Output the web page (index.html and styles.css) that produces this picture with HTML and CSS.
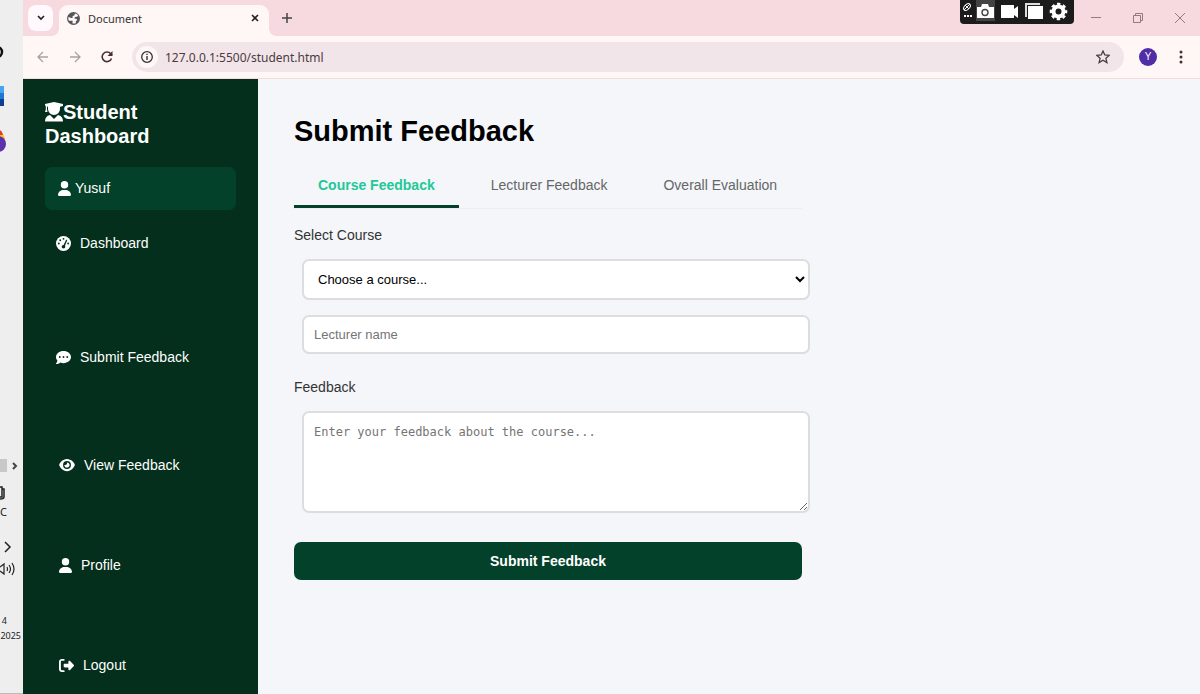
FILE: index.html
```
<!DOCTYPE html>
<html lang="en">
<head>
    <meta charset="UTF-8">
    <meta name="viewport" content="width=device-width, initial-scale=1.0">
    <title>Document</title>
    <link rel="stylesheet" href="styles.css">
</head>
<body>
<svg class="symbols" aria-hidden="true">
    <symbol id="user" viewBox="0 0 448 512"><path d="M224 256A128 128 0 1 0 224 0a128 128 0 1 0 0 256zm-45.7 48C79.8 304 0 383.8 0 482.3C0 498.7 13.3 512 29.7 512l388.6 0c16.4 0 29.7-13.3 29.7-29.7C448 383.8 368.2 304 269.7 304l-91.4 0z"/></symbol>
</svg>

<!-- desktop taskbar -->
<aside class="taskbar">
    <svg class="task-app" width="23" height="20" viewBox="0 0 23 20"><circle cx="-3" cy="10" r="5" fill="none" stroke="#111" stroke-width="2.5"/></svg>
    <svg class="task-app" width="23" height="20" viewBox="0 0 23 20"><path fill="#43a5ee" d="M0 0h4v7H0z"/><path fill="#2176d2" d="M0 7h4v6H0z"/><path fill="#103f91" d="M0 13h4v7H0z"/></svg>
    <svg class="task-app" width="23" height="22" viewBox="0 0 23 22"><circle cx="-5" cy="10" r="10" fill="#fbc116"/><path fill="#e33b2e" d="M0 0q3 2 3 5H0z"/><circle cx="-2" cy="14" r="8" fill="#5b31ae"/></svg>
    <div class="task-scroll"><span class="thumb"></span><svg width="8" height="8" viewBox="0 0 8 8"><path d="M2 1l3 3-3 3" fill="none" stroke="#444" stroke-width="2"/></svg></div>
    <svg class="task-clip" width="23" height="16" viewBox="0 0 23 16"><path d="M0 2h2v10H0M2 4h2v8q0 2-4 2" fill="none" stroke="#222" stroke-width="1.5"/></svg>
    <span class="temp">C</span>
    <svg class="task-more" width="23" height="12" viewBox="0 0 23 12"><path d="M5 1l5 5-5 5" fill="none" stroke="#222" stroke-width="1.5"/></svg>
    <svg class="task-sound" width="23" height="14" viewBox="0 0 23 14"><path d="M0 5l4-3v10l-4-3M7 5q1 2 0 4M9 3q3 4 0 8M12 1q4 6 0 12" fill="none" stroke="#222" stroke-width="1.2"/></svg>
    <div class="clock"><span class="time">4</span><span>2025</span></div>
</aside>

<div class="browser">
    <header class="tab-bar">
        <button class="tab-search" aria-label="Search tabs"><svg width="10" height="10" viewBox="0 0 10 10"><path d="M2 3l3 3 3-3" fill="none" stroke="#222" stroke-width="1.7"/></svg></button>
        <div class="tab">
            <svg width="13" height="13" viewBox="0 0 14 14"><circle cx="7" cy="7" r="7" fill="#53565b"/><path d="M8.500 1.500L8 3.500 6 4.500v2H4.500L1.500 5.500Q1 8 2 9.500h4v2.800Q8 12.800 9.500 12V9.800l1.500-.8-.5-1.500L8 7l.5-1.500L11 5l1-1.500Q10.500 1.800 8.500 1.500z" fill="#fff7f5"/></svg>
            <span class="tab-name">Document</span>
            <button class="chrome-btn" aria-label="Close tab"><svg width="8" height="8" viewBox="0 0 8 8"><path d="M1 1l6 6M7 1L1 7" stroke="#222" stroke-width="1.600"/></svg></button>
        </div>
        <button class="chrome-btn new-tab" aria-label="New tab"><svg width="10" height="10" viewBox="0 0 10 10"><path d="M5 0v10M0 5h10" stroke="#444" stroke-width="1.500"/></svg></button>
        <div class="recorder">
            <svg width="114" height="24" viewBox="0 0 114 24">
                <path d="M16 0h19v21H16z" fill="#444"/>
                <g fill="none" stroke="#fff"><ellipse cx="7" cy="7" rx="4" ry="2.500" transform="rotate(-45 7 7)"/><path d="M4 10l6-6M5 5l4 4"/></g>
                <path d="M4 15h2v2H4zM7 15h2v2H7zM10 15h2v2h-2z" fill="#fff"/>
                <path d="M17 7h4l1-3h6l1 3h5v11H17z" fill="#fff"/><circle cx="25" cy="12.500" r="3" fill="none" stroke="#444" stroke-width="1.400"/>
                <path d="M41 5h13v4l4-3v12l-4-3v3H41z" fill="#fff"/>
                <path d="M65 3h15v2H67v12h-2z" fill="#ddd"/><path d="M68 6h15v13H68z" fill="#fff"/>
                <circle cx="98.500" cy="11.500" r="5" fill="none" stroke="#fff" stroke-width="4"/><circle cx="98.500" cy="11.500" r="7.500" fill="none" stroke="#fff" stroke-width="2.600" stroke-dasharray="3.300 2.590" stroke-dashoffset="1.650"/>
            </svg>
        </div>
        <div class="window-btns">
            <button class="chrome-btn" aria-label="Minimize"><svg width="10" height="10" viewBox="0 0 10 10"><path d="M0 4.500h10" stroke="#8f7b80"/></svg></button>
            <button class="chrome-btn" aria-label="Restore"><svg width="10" height="10" viewBox="0 0 10 10"><path d="M.5 2.500h7v7h-7zM2.500 2.500v-2h7v7h-2" fill="none" stroke="#8f7b80"/></svg></button>
            <button class="chrome-btn" aria-label="Close"><svg width="10" height="10" viewBox="0 0 10 10"><path d="M0 0l10 10M10 0L0 10" stroke="#8f7b80"/></svg></button>
        </div>
    </header>
    <div class="toolbar">
        <button class="chrome-btn" aria-label="Back"><svg width="12" height="12" viewBox="0 0 12 12"><path d="M11 6H1M6 1L1 6l5 5" fill="none" stroke="#aaa1a2" stroke-width="1.300"/></svg></button>
        <button class="chrome-btn" aria-label="Forward"><svg width="12" height="12" viewBox="0 0 12 12"><path d="M1 6h10M6 1l5 5-5 5" fill="none" stroke="#aaa1a2" stroke-width="1.300"/></svg></button>
        <button class="chrome-btn" aria-label="Reload"><svg width="12" height="12" viewBox="0 0 12 12"><path d="M10.500 7.500A4.800 4.800 0 1 1 9.700 2.800L11 4" fill="none" stroke="#4b2c33" stroke-width="1.600"/><path d="M11.500 0v5h-5z" fill="#4b2c33"/></svg></button>
        <div class="address">
            <span class="info"><svg width="12" height="12" viewBox="0 0 12 12"><circle cx="6" cy="6" r="5.300" fill="none" stroke="#333" stroke-width="1.300"/><path d="M6 5v4M6 2.700v1.400" stroke="#333" stroke-width="1.400"/></svg></span>
            <input class="url" type="text" aria-label="Address" value="127.0.0.1:5500/student.html">
            <button class="chrome-btn" aria-label="Bookmark"><svg width="14" height="14" viewBox="0 0 14 14"><path d="M7 1l1.800 4 4.400.4-3.300 2.900 1 4.300L7 10.300l-3.900 2.300 1-4.300L.8 5.400 5.200 5z" fill="none" stroke="#4b3b40" stroke-width="1.300"/></svg></button>
        </div>
        <span class="avatar">Y</span>
        <button class="chrome-btn menu" aria-label="Menu"><svg width="4" height="14" viewBox="0 0 4 14" fill="#4b2c33"><circle cx="2" cy="2" r="1.500"/><circle cx="2" cy="7" r="1.500"/><circle cx="2" cy="12" r="1.500"/></svg></button>
    </div>

    <div class="page">
        <nav class="sidebar">
            <h2><svg class="grad" width="18" height="20" viewBox="0 0 18 20"><path d="M0 2l9-2 9 2v2l-3 .8V7a6 6 0 0 1-12 0V4.800l-1-.3v3L2.500 10H0l.8-2.500V4L0 3.500z"/><path d="M5 13l4 4 4-4q5 1 5 6.500H0Q0 14 5 13z"/></svg>Student Dashboard</h2>
            <div class="user"><svg width="13" height="15"><use href="#user"/></svg>Yusuf</div>
            <ul>
                <li class="wide first"><a href="#"><svg width="15" height="15" viewBox="0 0 512 512"><circle cx="256" cy="256" r="256"/><g fill="#032f1c"><circle cx="256" cy="96" r="32"/><circle cx="144" cy="144" r="32"/><circle cx="96" cy="256" r="32"/><circle cx="416" cy="256" r="32"/><circle cx="256" cy="368" r="62"/><path d="M238 350L346 132q22-18 38 6L288 380z"/></g></svg>Dashboard</a></li>
                <li class="wide second"><a href="#"><svg width="15" height="15" viewBox="0 0 512 512"><path d="M256 448c141.400 0 256-93.100 256-208S397.400 32 256 32S0 125.100 0 240c0 45.100 17.700 86.800 47.700 120.900c-1.900 24.500-11.400 46.300-21.400 62.900c-5.500 9.200-11.100 16.600-15.200 21.600l-6.500 7.400c-4.600 4.600-5.900 11.400-3.400 17.400c2.500 6 8.300 9.900 14.800 9.900c28.700 0 57.600-8.900 81.600-19.300c22.900-10 42.400-21.900 54.300-30.600c31.800 11.500 67 17.900 104.100 17.900z"/><g fill="#032f1c"><circle cx="128" cy="240" r="32"/><circle cx="256" cy="240" r="32"/><circle cx="384" cy="240" r="32"/></g></svg>Submit Feedback</a></li>
                <li><a href="#"><svg width="16" height="14" viewBox="0 0 576 512"><path d="M288 32c-80.800 0-145.500 36.800-192.600 80.600C48.600 156 17.300 208 2.500 243.700c-3.300 7.900-3.300 16.700 0 24.600C17.300 304 48.600 356 95.400 399.400C142.500 443.200 207.200 480 288 480s145.500-36.800 192.600-80.600c46.800-43.500 78.100-95.400 93-131.100c3.300-7.900 3.300-16.700 0-24.600c-14.900-35.700-46.200-87.700-93-131.100C433.500 68.800 368.800 32 288 32zM144 256a144 144 0 1 1 288 0 144 144 0 1 1 -288 0zm144-64c0 35.300-28.700 64-64 64c-7.100 0-13.900-1.200-20.300-3.300c-5.500-1.800-11.900 1.600-11.700 7.400c.3 6.900 1.300 13.800 3.200 20.700c13.700 51.200 66.400 81.600 117.600 67.900s81.600-66.400 67.900-117.600c-11.100-41.500-47.800-69.400-88.600-71.100c-5.800-.2-9.200 6.100-7.400 11.700c2.100 6.400 3.300 13.200 3.300 20.300z"/></svg>View Feedback</a></li>
                <li><a href="#"><svg width="13" height="15"><use href="#user"/></svg>Profile</a></li>
                <li><a href="#"><svg width="15" height="15" viewBox="0 0 512 512"><path d="M377.900 105.900L500.700 228.700c7.200 7.200 11.300 17.100 11.300 27.300s-4.100 20.100-11.300 27.300L377.900 406.100c-6.400 6.400-15 9.900-24 9.900c-18.700 0-33.900-15.200-33.900-33.900l0-62.100-128 0c-17.700 0-32-14.300-32-32l0-64c0-17.700 14.300-32 32-32l128 0 0-62.100c0-18.700 15.200-33.900 33.900-33.900c9 0 17.600 3.600 24 9.900zM160 96L96 96c-17.700 0-32 14.300-32 32l0 256c0 17.700 14.300 32 32 32l64 0c17.700 0 32 14.300 32 32s-14.300 32-32 32l-64 0c-53 0-96-43-96-96L0 128C0 75 43 32 96 32l64 0c17.700 0 32 14.300 32 32s-14.300 32-32 32z"/></svg>Logout</a></li>
            </ul>
        </nav>
        <main class="content">
            <h1>Submit Feedback</h1>
            <form class="feedback">
                <div class="form-tabs">
                    <button type="button" class="active">Course Feedback</button>
                    <button type="button">Lecturer Feedback</button>
                    <button type="button">Overall Evaluation</button>
                </div>
                <label for="course">Select Course</label>
                <select id="course" class="field">
                    <option>Choose a course...</option>
                </select>
                <input class="field" type="text" placeholder="Lecturer name" aria-label="Lecturer name">
                <label for="message">Feedback</label>
                <textarea id="message" class="field" placeholder="Enter your feedback about the course..."></textarea>
                <button type="submit" class="submit">Submit Feedback</button>
            </form>
        </main>
    </div>
</div>
</body>
</html>
```
FILE: styles.css
```
*{
    margin: 0;
    padding: 0;
    box-sizing: border-box;
}
body{
    display: flex;
    min-height: 100vh;
    font-family: "Liberation Sans", Arial, sans-serif;
    font-size: 14px;
    background: #f4f6fa;
}
svg{
    display: block;
    flex-shrink: 0;
}
button{
    border: none;
    background: none;
    font-family: inherit;
    font-size: inherit;
}
.symbols{
    position: absolute;
    width: 0;
    height: 0;
}

/* taskbar */
.taskbar{
    flex: 0 0 23px;
    display: flex;
    flex-direction: column;
    padding: 42px 0 2px;
    overflow: hidden;
    background: #eee;
    border-bottom: 1px solid #bbb;
    font-family: "Noto Sans", sans-serif;
    font-size: 11px;
    line-height: 15px;
    color: #222;
}
.task-app{
    margin-bottom: 24px;
}
.task-scroll{
    display: flex;
    align-items: center;
    gap: 4px;
    margin-top: auto;
}
.thumb{
    width: 7px;
    height: 13px;
    background: #c8c8c8;
}
.task-clip{
    margin-top: 13px;
}
.temp{
    margin-top: 3px;
}
.task-more{
    margin-top: 22px;
}
.task-sound{
    margin-top: 9px;
}
.clock{
    display: flex;
    flex-direction: column;
    align-items: flex-end;
    padding-right: 2px;
    margin: 37px 0 48px;
    font-size: 9px;
}
.time{
    padding-right: 14px;
}

/* browser */
.browser{
    flex: 1;
    min-width: 0;
    display: flex;
    flex-direction: column;
}
.chrome-btn{
    display: flex;
    align-items: center;
    justify-content: center;
}
.tab-bar{
    display: flex;
    align-items: center;
    height: 36px;
    padding: 0 15px 0 5px;
    background: #f6dae0;
    font-family: "Noto Sans", sans-serif;
}
.tab-search{
    display: flex;
    align-items: center;
    justify-content: center;
    width: 25px;
    height: 26px;
    border-radius: 8px;
    background: #fff9fd;
}
.tab{
    position: relative;
    display: flex;
    align-items: center;
    align-self: flex-end;
    gap: 8px;
    width: 210px;
    height: 31px;
    margin-left: 6px;
    padding: 0 10px 5px 8px;
    border-radius: 9px 9px 0 0;
    background: #fff7f5;
}
.tab::before,
.tab::after{
    content: "";
    position: absolute;
    bottom: 0;
    width: 8px;
    height: 8px;
}
.tab::before{
    right: 100%;
    background: radial-gradient(circle at 0 0, #f6dae0 8px, #fff7f5 8px);
}
.tab::after{
    left: 100%;
    background: radial-gradient(circle at 100% 0, #f6dae0 8px, #fff7f5 8px);
}
.tab-name{
    flex: 1;
    font-size: 11px;
    color: #333;
}
.new-tab{
    margin-left: 13px;
}
.recorder{
    align-self: flex-start;
    margin-left: auto;
    border-radius: 0 0 4px 4px;
    background: #1c1c1c;
    overflow: hidden;
}
.window-btns{
    display: flex;
    gap: 32px;
    margin-left: 17px;
}
.toolbar{
    display: flex;
    align-items: center;
    gap: 20px;
    height: 43px;
    padding: 0 17px 0 14px;
    border-bottom: 1px solid #f6dae0;
    background: #fff7f5;
}
.address{
    flex: 1;
    display: flex;
    align-items: center;
    height: 30px;
    margin-left: -1px;
    padding: 0 14px 0 4px;
    border-radius: 15px;
    background: #f2e5ea;
}
.info{
    display: flex;
    align-items: center;
    justify-content: center;
    width: 22px;
    height: 22px;
    border-radius: 50%;
    background: #fff7f5;
}
.url{
    flex: 1;
    min-width: 0;
    margin-left: 7px;
    border: none;
    background: none;
    font: 12px "Noto Sans", sans-serif;
    color: #4b3b40;
}
.avatar{
    width: 18px;
    height: 18px;
    margin-left: -5px;
    border-radius: 50%;
    background: #512da8;
    color: #fff;
    font-size: 10px;
    line-height: 18px;
    text-align: center;
}
.menu{
    margin-left: 2px;
}

/* page */
.page{
    flex: 1;
    display: flex;
}
.sidebar{
    flex: 0 0 235px;
    padding: 21px 22px 0;
    background: #032f1c;
    color: #fff;
}
.sidebar svg{
    fill: #fff;
}
.sidebar h2{
    font-size: 20px;
    line-height: 24px;
}
.grad{
    display: inline-block;
    vertical-align: -3px;
}
.user{
    display: flex;
    align-items: center;
    gap: 4px;
    height: 43px;
    margin-top: 19px;
    padding: 0 13px 1px;
    border-radius: 7px;
    background: #04412a;
}
.sidebar ul{
    display: flex;
    flex-direction: column;
    gap: 82px;
    margin-top: 24px;
    list-style: none;
}
.sidebar a{
    display: flex;
    align-items: center;
    gap: 9px;
    padding-left: 14px;
    line-height: 18px;
    color: #fff;
    text-decoration: none;
}
.sidebar .wide a{
    padding-left: 11px;
}
.sidebar .first{
    padding-bottom: 14px;
}
.sidebar .second{
    padding-bottom: 8px;
}
.content{
    flex: 1;
    padding: 35px 36px;
}
.content h1{
    font-size: 29px;
    line-height: 34px;
}
.feedback{
    display: flex;
    flex-direction: column;
    max-width: 508px;
    margin-top: 15px;
    color: #333;
}
.form-tabs{
    display: flex;
    gap: 8px;
    margin-bottom: 17px;
    border-bottom: 1px solid #eee;
}
.form-tabs button{
    padding: 13px 24px 11px;
    border-bottom: 3px solid transparent;
    line-height: 18px;
    white-space: nowrap;
    color: #666;
}
.form-tabs .active{
    border-color: #04412a;
    font-weight: bold;
    color: #20c997;
}
.feedback label{
    line-height: 18px;
}
.field{
    width: 100%;
    margin: 0 0 16px 8px;
    padding: 10px;
    border: 2px solid #ddd;
    border-radius: 7px;
    background: #fff;
    font-family: inherit;
    font-size: 13px;
}
.field::placeholder{
    color: #757575;
}
label + .field{
    margin-top: 15px;
}
select.field{
    height: 41px;
    margin-bottom: 15px;
    color: #000;
}
input.field{
    height: 39px;
    margin-bottom: 24px;
}
textarea.field{
    height: 102px;
    margin-bottom: 29px;
    padding-top: 12px;
    font-family: "DejaVu Sans Mono", monospace;
    font-size: 12px;
    resize: vertical;
}
.submit{
    height: 38px;
    border-radius: 7px;
    background: #04412a;
    color: #fff;
    font-weight: bold;
}
```
